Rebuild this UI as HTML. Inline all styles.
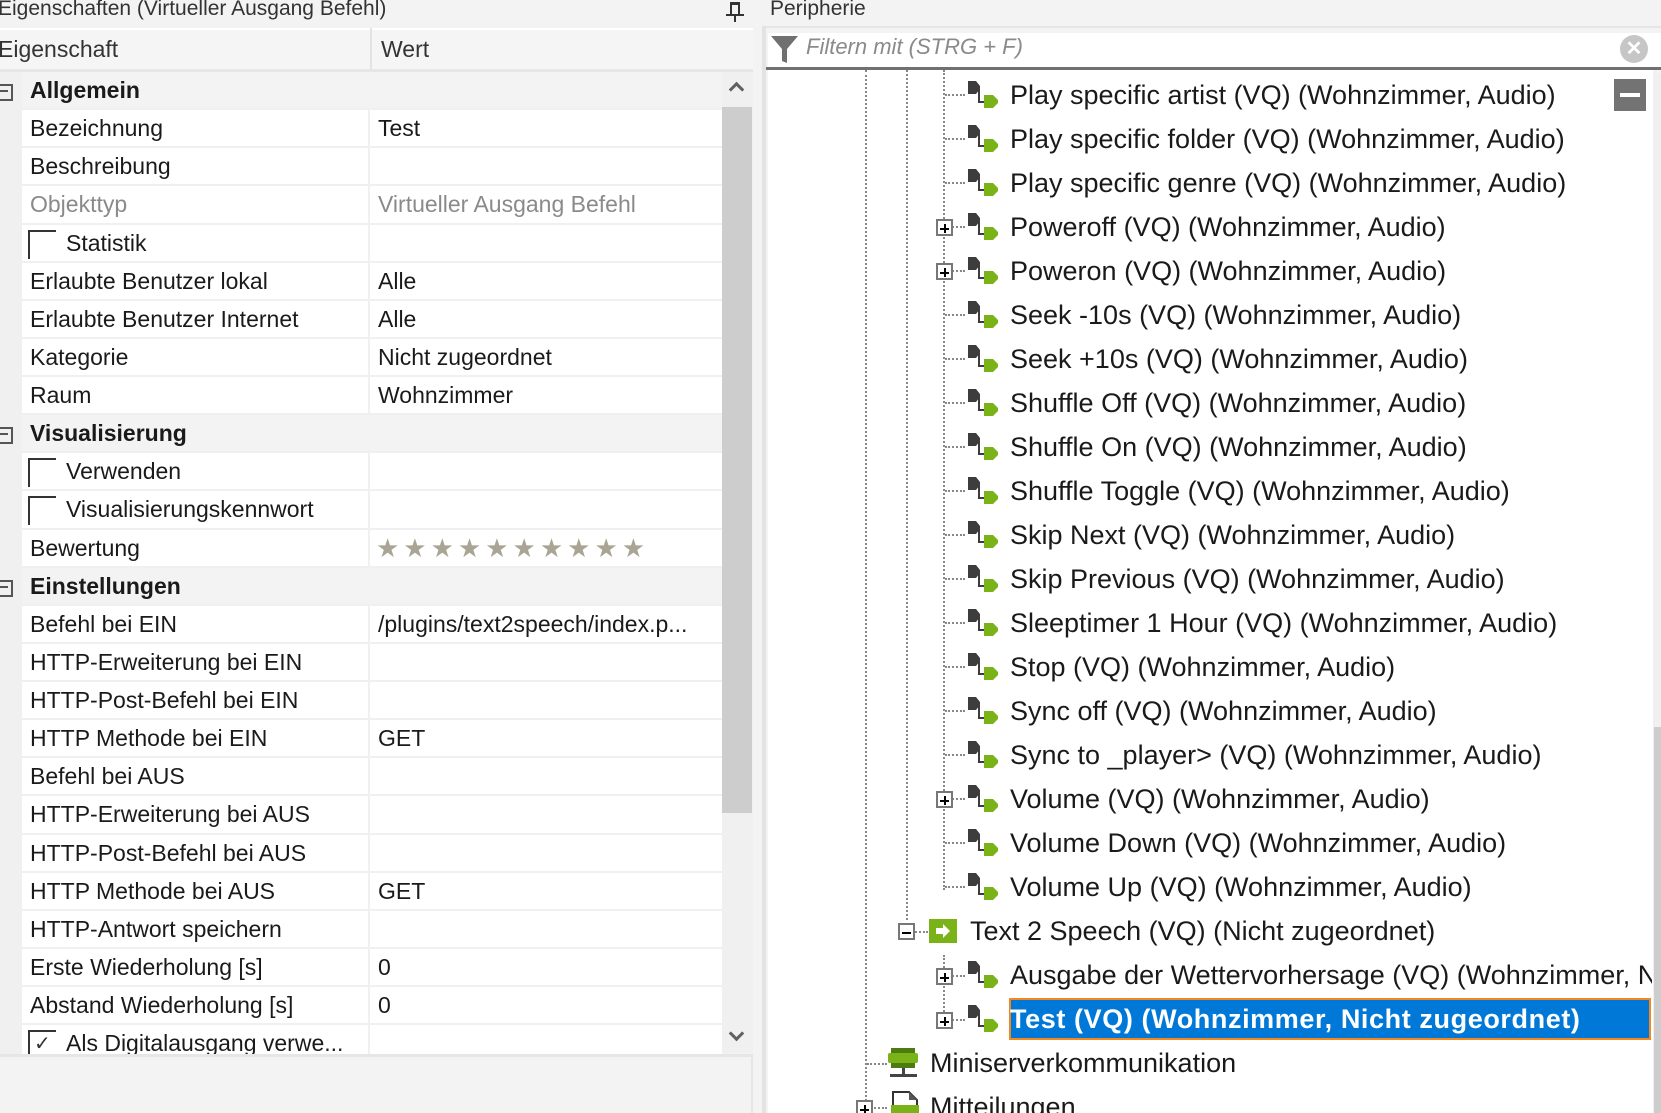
<!DOCTYPE html>
<html><head><meta charset="utf-8">
<style>
*{box-sizing:border-box;margin:0;padding:0}
body{width:1661px;height:1113px;overflow:hidden;background:#f3f3f3;font-family:"Liberation Sans",sans-serif;color:#1a1a1a;position:relative}
.abs{position:absolute}
.lt{font-size:21px;white-space:nowrap}
#rows{position:absolute;left:0;top:72px;width:722px}
.r{height:38.13px;display:flex;border-bottom:2px solid #f0f0f0;background:#f0f0f0}
.r .m{width:22px;flex:none;background:#f0f0f0;position:relative}
.r .a{width:348px;flex:none;background:#fff;border-right:2px solid #f0f0f0;padding-left:8px;line-height:36px;font-size:23px;white-space:nowrap;position:relative;overflow:hidden}
.r .b{flex:1;background:#fff;padding-left:8px;line-height:36px;font-size:23px;white-space:nowrap;overflow:hidden}
.r.g .a,.r.g .b{background:#f3f3f3;font-weight:bold}
.r.g .a{border-right:none}
.g .m:after{content:"";position:absolute;left:0;top:12px;width:11px;height:13px;border:2px solid #555;border-left:none}
.g .m:before{content:"";position:absolute;left:0;top:18px;width:8px;height:2px;background:#555}
.gray{color:#8a8a8a}
.cb{padding-left:44px!important}
.cb:before{content:"";position:absolute;left:6px;top:5px;width:26px;height:27px;border-top:2px solid #333;border-left:2px solid #333}
.ck:after{content:"✓";position:absolute;left:12px;top:1px;font-size:20px;color:#333}
.tr{position:absolute;height:44px;line-height:44px;font-size:27px;white-space:nowrap;color:#1a1a1a}
.ic{position:absolute;width:36px;height:28px}
.pl{position:absolute;width:17px;height:17px;border:2px solid #777;background:#fff}
.pl:before{content:"";position:absolute;left:2px;top:6.5px;width:9px;height:2px;background:#000}
.pl.p:after{content:"";position:absolute;left:5.5px;top:3px;width:2px;height:9px;background:#000}
.hd{position:absolute;border-top:2px dotted #888;height:0}
.vd{position:absolute;border-left:2px dotted #888;width:0}
#clip{position:absolute;left:0;top:0;width:1652px;height:1113px;overflow:hidden}
</style></head><body>
<div class="abs lt" style="left:-2px;top:-3px;font-size:21px;color:#333">Eigenschaften (Virtueller Ausgang Befehl)</div>
<div class="abs" style="left:730px;top:2px;width:10px;height:14px;border:2px solid #333;border-top-width:3px"></div>
<div class="abs" style="left:726px;top:14px;width:18px;height:2px;background:#333"></div>
<div class="abs" style="left:734px;top:16px;width:2px;height:6px;background:#333"></div>
<div class="abs" style="left:0;top:28px;width:753px;height:44px;background:#f5f5f5;border-top:2px solid #fff;border-bottom:3px solid #e6e6e6"></div>
<div class="abs" style="left:370px;top:28px;width:2px;height:42px;background:#e3e3e3"></div>
<div class="abs lt" style="left:-2px;top:36px;font-size:23px;color:#333">Eigenschaft</div>
<div class="abs lt" style="left:381px;top:36px;font-size:23px;color:#333">Wert</div>
<div id="rows">
<div class="r g"><div class="m"></div><div class="a">Allgemein</div><div class="b"></div></div>
<div class="r"><div class="m"></div><div class="a">Bezeichnung</div><div class="b">Test</div></div>
<div class="r"><div class="m"></div><div class="a">Beschreibung</div><div class="b"></div></div>
<div class="r"><div class="m"></div><div class="a gray">Objekttyp</div><div class="b gray">Virtueller Ausgang Befehl</div></div>
<div class="r"><div class="m"></div><div class="a cb">Statistik</div><div class="b"></div></div>
<div class="r"><div class="m"></div><div class="a">Erlaubte Benutzer lokal</div><div class="b">Alle</div></div>
<div class="r"><div class="m"></div><div class="a">Erlaubte Benutzer Internet</div><div class="b">Alle</div></div>
<div class="r"><div class="m"></div><div class="a">Kategorie</div><div class="b">Nicht zugeordnet</div></div>
<div class="r"><div class="m"></div><div class="a">Raum</div><div class="b">Wohnzimmer</div></div>
<div class="r g"><div class="m"></div><div class="a">Visualisierung</div><div class="b"></div></div>
<div class="r"><div class="m"></div><div class="a cb">Verwenden</div><div class="b"></div></div>
<div class="r"><div class="m"></div><div class="a cb">Visualisierungskennwort</div><div class="b"></div></div>
<div class="r"><div class="m"></div><div class="a">Bewertung</div><div class="b" style="color:#aaa494;font-size:26px;letter-spacing:4px;padding-left:6px">★★★★★★★★★★</div></div>
<div class="r g"><div class="m"></div><div class="a">Einstellungen</div><div class="b"></div></div>
<div class="r"><div class="m"></div><div class="a">Befehl bei EIN</div><div class="b">/plugins/text2speech/index.p...</div></div>
<div class="r"><div class="m"></div><div class="a">HTTP-Erweiterung bei EIN</div><div class="b"></div></div>
<div class="r"><div class="m"></div><div class="a">HTTP-Post-Befehl bei EIN</div><div class="b"></div></div>
<div class="r"><div class="m"></div><div class="a">HTTP Methode bei EIN</div><div class="b">GET</div></div>
<div class="r"><div class="m"></div><div class="a">Befehl bei AUS</div><div class="b"></div></div>
<div class="r"><div class="m"></div><div class="a">HTTP-Erweiterung bei AUS</div><div class="b"></div></div>
<div class="r"><div class="m"></div><div class="a">HTTP-Post-Befehl bei AUS</div><div class="b"></div></div>
<div class="r"><div class="m"></div><div class="a">HTTP Methode bei AUS</div><div class="b">GET</div></div>
<div class="r"><div class="m"></div><div class="a">HTTP-Antwort speichern</div><div class="b"></div></div>
<div class="r"><div class="m"></div><div class="a">Erste Wiederholung [s]</div><div class="b">0</div></div>
<div class="r"><div class="m"></div><div class="a">Abstand Wiederholung [s]</div><div class="b">0</div></div>
<div class="r" style="height:30px;overflow:hidden;border:none"><div class="m"></div><div class="a cb ck">Als Digitalausgang verwe...</div><div class="b"></div></div>
</div>
<div class="abs" style="left:722px;top:72px;width:31px;height:981px;background:#f0f0f0"></div>
<div class="abs" style="left:722px;top:107px;width:30px;height:706px;background:#cdcdcd"></div>
<div class="abs" style="left:731px;top:84px;width:11px;height:11px;border-top:3px solid #606060;border-left:3px solid #606060;transform:rotate(45deg)"></div>
<div class="abs" style="left:731px;top:1028px;width:11px;height:11px;border-bottom:3px solid #606060;border-right:3px solid #606060;transform:rotate(45deg)"></div>
<div class="abs" style="left:0;top:1054px;width:753px;height:59px;background:#f3f3f3;border-top:3px solid #e6e6e6;border-right:2px solid #e6e6e6"></div>

<div class="abs" style="left:762px;top:26px;width:4px;height:1087px;background:#e3e3e3"></div>
<div class="abs lt" style="left:770px;top:-3px;color:#333">Peripherie</div>
<div class="abs" style="left:766px;top:26px;width:895px;height:2px;background:#e6e6e6"></div>
<div class="abs" style="left:768px;top:33px;width:893px;height:34px;background:#fff"></div>
<div class="abs" style="left:766px;top:67px;width:895px;height:3px;background:#707070"></div>
<svg class="abs" style="left:770px;top:34px" width="30" height="30"><path d="M1,2 H28 L17,15 V29 L12,27 V15 Z" fill="#707070"/></svg>
<div class="abs lt" style="left:806px;top:34px;font-style:italic;color:#8a8a8a;font-size:22px">Filtern mit (STRG + F)</div>
<div class="abs" style="left:1620px;top:35px;width:28px;height:28px;border-radius:50%;background:#c6c6c6;color:#fff;font-size:20px;line-height:28px;text-align:center;font-weight:bold">✕</div>
<div class="abs" style="left:768px;top:70px;width:885px;height:1043px;background:#fff"></div>
<div class="abs" style="left:1653px;top:73px;width:8px;height:1040px;background:#f0f0f0"></div>
<div class="abs" style="left:1654px;top:727px;width:7px;height:386px;background:#cdcdcd"></div>
<div class="abs" style="left:1614px;top:79px;width:32px;height:32px;background:#737373"></div>
<div class="abs" style="left:1620px;top:93px;width:20px;height:4px;background:#fff"></div>
<div id="clip">
<div class="vd" style="left:865px;top:70px;height:1043px"></div>
<div class="vd" style="left:906px;top:70px;height:850px"></div>
<div class="vd" style="left:943px;top:70px;height:820px"></div>
<div class="vd" style="left:943px;top:955px;height:65px"></div>

<div class="hd" style="left:945px;top:94px;width:20px"></div>
<svg class="ic" style="left:966px;top:81px"><path d="M2,0H10L14,5V8L10,13H2Z" fill="#3d3d3d"/><path d="M13,8V21H19" stroke="#3d3d3d" stroke-width="2" fill="none"/><path d="M18,14H27L32,19V22L27,27H18Z" fill="#7ab317"/></svg>
<div class="tr" style="left:1010px;top:73px">Play specific artist (VQ) (Wohnzimmer, Audio)</div>

<div class="hd" style="left:945px;top:138px;width:20px"></div>
<svg class="ic" style="left:966px;top:125px"><path d="M2,0H10L14,5V8L10,13H2Z" fill="#3d3d3d"/><path d="M13,8V21H19" stroke="#3d3d3d" stroke-width="2" fill="none"/><path d="M18,14H27L32,19V22L27,27H18Z" fill="#7ab317"/></svg>
<div class="tr" style="left:1010px;top:117px">Play specific folder (VQ) (Wohnzimmer, Audio)</div>

<div class="hd" style="left:945px;top:182px;width:20px"></div>
<svg class="ic" style="left:966px;top:169px"><path d="M2,0H10L14,5V8L10,13H2Z" fill="#3d3d3d"/><path d="M13,8V21H19" stroke="#3d3d3d" stroke-width="2" fill="none"/><path d="M18,14H27L32,19V22L27,27H18Z" fill="#7ab317"/></svg>
<div class="tr" style="left:1010px;top:161px">Play specific genre (VQ) (Wohnzimmer, Audio)</div>

<div class="hd" style="left:945px;top:226px;width:20px"></div>
<div class="pl p" style="left:936px;top:219px"></div>
<svg class="ic" style="left:966px;top:213px"><path d="M2,0H10L14,5V8L10,13H2Z" fill="#3d3d3d"/><path d="M13,8V21H19" stroke="#3d3d3d" stroke-width="2" fill="none"/><path d="M18,14H27L32,19V22L27,27H18Z" fill="#7ab317"/></svg>
<div class="tr" style="left:1010px;top:205px">Poweroff (VQ) (Wohnzimmer, Audio)</div>

<div class="hd" style="left:945px;top:270px;width:20px"></div>
<div class="pl p" style="left:936px;top:263px"></div>
<svg class="ic" style="left:966px;top:257px"><path d="M2,0H10L14,5V8L10,13H2Z" fill="#3d3d3d"/><path d="M13,8V21H19" stroke="#3d3d3d" stroke-width="2" fill="none"/><path d="M18,14H27L32,19V22L27,27H18Z" fill="#7ab317"/></svg>
<div class="tr" style="left:1010px;top:249px">Poweron (VQ) (Wohnzimmer, Audio)</div>

<div class="hd" style="left:945px;top:314px;width:20px"></div>
<svg class="ic" style="left:966px;top:301px"><path d="M2,0H10L14,5V8L10,13H2Z" fill="#3d3d3d"/><path d="M13,8V21H19" stroke="#3d3d3d" stroke-width="2" fill="none"/><path d="M18,14H27L32,19V22L27,27H18Z" fill="#7ab317"/></svg>
<div class="tr" style="left:1010px;top:293px">Seek -10s (VQ) (Wohnzimmer, Audio)</div>

<div class="hd" style="left:945px;top:358px;width:20px"></div>
<svg class="ic" style="left:966px;top:345px"><path d="M2,0H10L14,5V8L10,13H2Z" fill="#3d3d3d"/><path d="M13,8V21H19" stroke="#3d3d3d" stroke-width="2" fill="none"/><path d="M18,14H27L32,19V22L27,27H18Z" fill="#7ab317"/></svg>
<div class="tr" style="left:1010px;top:337px">Seek +10s (VQ) (Wohnzimmer, Audio)</div>

<div class="hd" style="left:945px;top:402px;width:20px"></div>
<svg class="ic" style="left:966px;top:389px"><path d="M2,0H10L14,5V8L10,13H2Z" fill="#3d3d3d"/><path d="M13,8V21H19" stroke="#3d3d3d" stroke-width="2" fill="none"/><path d="M18,14H27L32,19V22L27,27H18Z" fill="#7ab317"/></svg>
<div class="tr" style="left:1010px;top:381px">Shuffle Off (VQ) (Wohnzimmer, Audio)</div>

<div class="hd" style="left:945px;top:446px;width:20px"></div>
<svg class="ic" style="left:966px;top:433px"><path d="M2,0H10L14,5V8L10,13H2Z" fill="#3d3d3d"/><path d="M13,8V21H19" stroke="#3d3d3d" stroke-width="2" fill="none"/><path d="M18,14H27L32,19V22L27,27H18Z" fill="#7ab317"/></svg>
<div class="tr" style="left:1010px;top:425px">Shuffle On (VQ) (Wohnzimmer, Audio)</div>

<div class="hd" style="left:945px;top:490px;width:20px"></div>
<svg class="ic" style="left:966px;top:477px"><path d="M2,0H10L14,5V8L10,13H2Z" fill="#3d3d3d"/><path d="M13,8V21H19" stroke="#3d3d3d" stroke-width="2" fill="none"/><path d="M18,14H27L32,19V22L27,27H18Z" fill="#7ab317"/></svg>
<div class="tr" style="left:1010px;top:469px">Shuffle Toggle (VQ) (Wohnzimmer, Audio)</div>

<div class="hd" style="left:945px;top:534px;width:20px"></div>
<svg class="ic" style="left:966px;top:521px"><path d="M2,0H10L14,5V8L10,13H2Z" fill="#3d3d3d"/><path d="M13,8V21H19" stroke="#3d3d3d" stroke-width="2" fill="none"/><path d="M18,14H27L32,19V22L27,27H18Z" fill="#7ab317"/></svg>
<div class="tr" style="left:1010px;top:513px">Skip Next (VQ) (Wohnzimmer, Audio)</div>

<div class="hd" style="left:945px;top:578px;width:20px"></div>
<svg class="ic" style="left:966px;top:565px"><path d="M2,0H10L14,5V8L10,13H2Z" fill="#3d3d3d"/><path d="M13,8V21H19" stroke="#3d3d3d" stroke-width="2" fill="none"/><path d="M18,14H27L32,19V22L27,27H18Z" fill="#7ab317"/></svg>
<div class="tr" style="left:1010px;top:557px">Skip Previous (VQ) (Wohnzimmer, Audio)</div>

<div class="hd" style="left:945px;top:622px;width:20px"></div>
<svg class="ic" style="left:966px;top:609px"><path d="M2,0H10L14,5V8L10,13H2Z" fill="#3d3d3d"/><path d="M13,8V21H19" stroke="#3d3d3d" stroke-width="2" fill="none"/><path d="M18,14H27L32,19V22L27,27H18Z" fill="#7ab317"/></svg>
<div class="tr" style="left:1010px;top:601px">Sleeptimer 1 Hour (VQ) (Wohnzimmer, Audio)</div>

<div class="hd" style="left:945px;top:666px;width:20px"></div>
<svg class="ic" style="left:966px;top:653px"><path d="M2,0H10L14,5V8L10,13H2Z" fill="#3d3d3d"/><path d="M13,8V21H19" stroke="#3d3d3d" stroke-width="2" fill="none"/><path d="M18,14H27L32,19V22L27,27H18Z" fill="#7ab317"/></svg>
<div class="tr" style="left:1010px;top:645px">Stop (VQ) (Wohnzimmer, Audio)</div>

<div class="hd" style="left:945px;top:710px;width:20px"></div>
<svg class="ic" style="left:966px;top:697px"><path d="M2,0H10L14,5V8L10,13H2Z" fill="#3d3d3d"/><path d="M13,8V21H19" stroke="#3d3d3d" stroke-width="2" fill="none"/><path d="M18,14H27L32,19V22L27,27H18Z" fill="#7ab317"/></svg>
<div class="tr" style="left:1010px;top:689px">Sync off (VQ) (Wohnzimmer, Audio)</div>

<div class="hd" style="left:945px;top:754px;width:20px"></div>
<svg class="ic" style="left:966px;top:741px"><path d="M2,0H10L14,5V8L10,13H2Z" fill="#3d3d3d"/><path d="M13,8V21H19" stroke="#3d3d3d" stroke-width="2" fill="none"/><path d="M18,14H27L32,19V22L27,27H18Z" fill="#7ab317"/></svg>
<div class="tr" style="left:1010px;top:733px">Sync to _player&gt; (VQ) (Wohnzimmer, Audio)</div>

<div class="hd" style="left:945px;top:798px;width:20px"></div>
<div class="pl p" style="left:936px;top:791px"></div>
<svg class="ic" style="left:966px;top:785px"><path d="M2,0H10L14,5V8L10,13H2Z" fill="#3d3d3d"/><path d="M13,8V21H19" stroke="#3d3d3d" stroke-width="2" fill="none"/><path d="M18,14H27L32,19V22L27,27H18Z" fill="#7ab317"/></svg>
<div class="tr" style="left:1010px;top:777px">Volume (VQ) (Wohnzimmer, Audio)</div>

<div class="hd" style="left:945px;top:842px;width:20px"></div>
<svg class="ic" style="left:966px;top:829px"><path d="M2,0H10L14,5V8L10,13H2Z" fill="#3d3d3d"/><path d="M13,8V21H19" stroke="#3d3d3d" stroke-width="2" fill="none"/><path d="M18,14H27L32,19V22L27,27H18Z" fill="#7ab317"/></svg>
<div class="tr" style="left:1010px;top:821px">Volume Down (VQ) (Wohnzimmer, Audio)</div>

<div class="hd" style="left:945px;top:886px;width:20px"></div>
<svg class="ic" style="left:966px;top:873px"><path d="M2,0H10L14,5V8L10,13H2Z" fill="#3d3d3d"/><path d="M13,8V21H19" stroke="#3d3d3d" stroke-width="2" fill="none"/><path d="M18,14H27L32,19V22L27,27H18Z" fill="#7ab317"/></svg>
<div class="tr" style="left:1010px;top:865px">Volume Up (VQ) (Wohnzimmer, Audio)</div>

<div class="hd" style="left:908px;top:931px;width:20px"></div>
<div class="pl" style="left:898px;top:923px"></div>
<div class="abs" style="left:929px;top:919px;width:28px;height:24px;background:#7ab317"></div>
<svg class="abs" style="left:935px;top:923px" width="16" height="16"><path d="M1,5H8V1L15,8L8,15V11H1Z" fill="#fff"/></svg>
<div class="tr" style="left:970px;top:909px">Text 2 Speech (VQ) (Nicht zugeordnet)</div>

<div class="hd" style="left:945px;top:975px;width:20px"></div>
<div class="pl p" style="left:936px;top:968px"></div>
<svg class="ic" style="left:966px;top:961px"><path d="M2,0H10L14,5V8L10,13H2Z" fill="#3d3d3d"/><path d="M13,8V21H19" stroke="#3d3d3d" stroke-width="2" fill="none"/><path d="M18,14H27L32,19V22L27,27H18Z" fill="#7ab317"/></svg>
<div class="tr" style="left:1010px;top:953px">Ausgabe der Wettervorhersage (VQ) (Wohnzimmer, Nicht zugeordnet)</div>

<div class="hd" style="left:945px;top:1019px;width:20px"></div>
<div class="pl p" style="left:936px;top:1012px"></div>
<svg class="ic" style="left:966px;top:1005px"><path d="M2,0H10L14,5V8L10,13H2Z" fill="#3d3d3d"/><path d="M13,8V21H19" stroke="#3d3d3d" stroke-width="2" fill="none"/><path d="M18,14H27L32,19V22L27,27H18Z" fill="#7ab317"/></svg>
<div class="abs" style="left:1009px;top:998px;width:642px;height:42px;background:#0078d7;border:2px solid #f5871f"></div>
<div class="tr" style="left:1010px;top:997px;color:#fff;font-weight:bold;font-size:27px;letter-spacing:0.6px">Test (VQ) (Wohnzimmer, Nicht zugeordnet)</div>

<div class="hd" style="left:867px;top:1063px;width:20px"></div>
<svg class="abs" style="left:888px;top:1047px" width="32" height="32"><rect x="3" y="1" width="24" height="5" fill="#4e7a12"/><rect x="0" y="6" width="30" height="10" fill="#7ab317" rx="2"/><rect x="3" y="16" width="24" height="5" fill="#4e7a12"/><rect x="14" y="21" width="3" height="6" fill="#444"/><rect x="2" y="27" width="27" height="3" fill="#444"/></svg>
<div class="tr" style="left:930px;top:1041px">Miniserverkommunikation</div>

<div class="hd" style="left:867px;top:1107px;width:20px"></div>
<div class="pl p" style="left:856px;top:1100px"></div>
<svg class="abs" style="left:890px;top:1091px" width="32" height="24"><path d="M3,1H19L27,9V24H3Z" fill="#fff" stroke="#333" stroke-width="2"/><path d="M19,1V9H27" fill="#555"/><rect x="1" y="14" width="28" height="10" fill="#7ab317"/></svg>
<div class="tr" style="left:930px;top:1085px">Mitteilungen</div>
</div>
</body></html>
